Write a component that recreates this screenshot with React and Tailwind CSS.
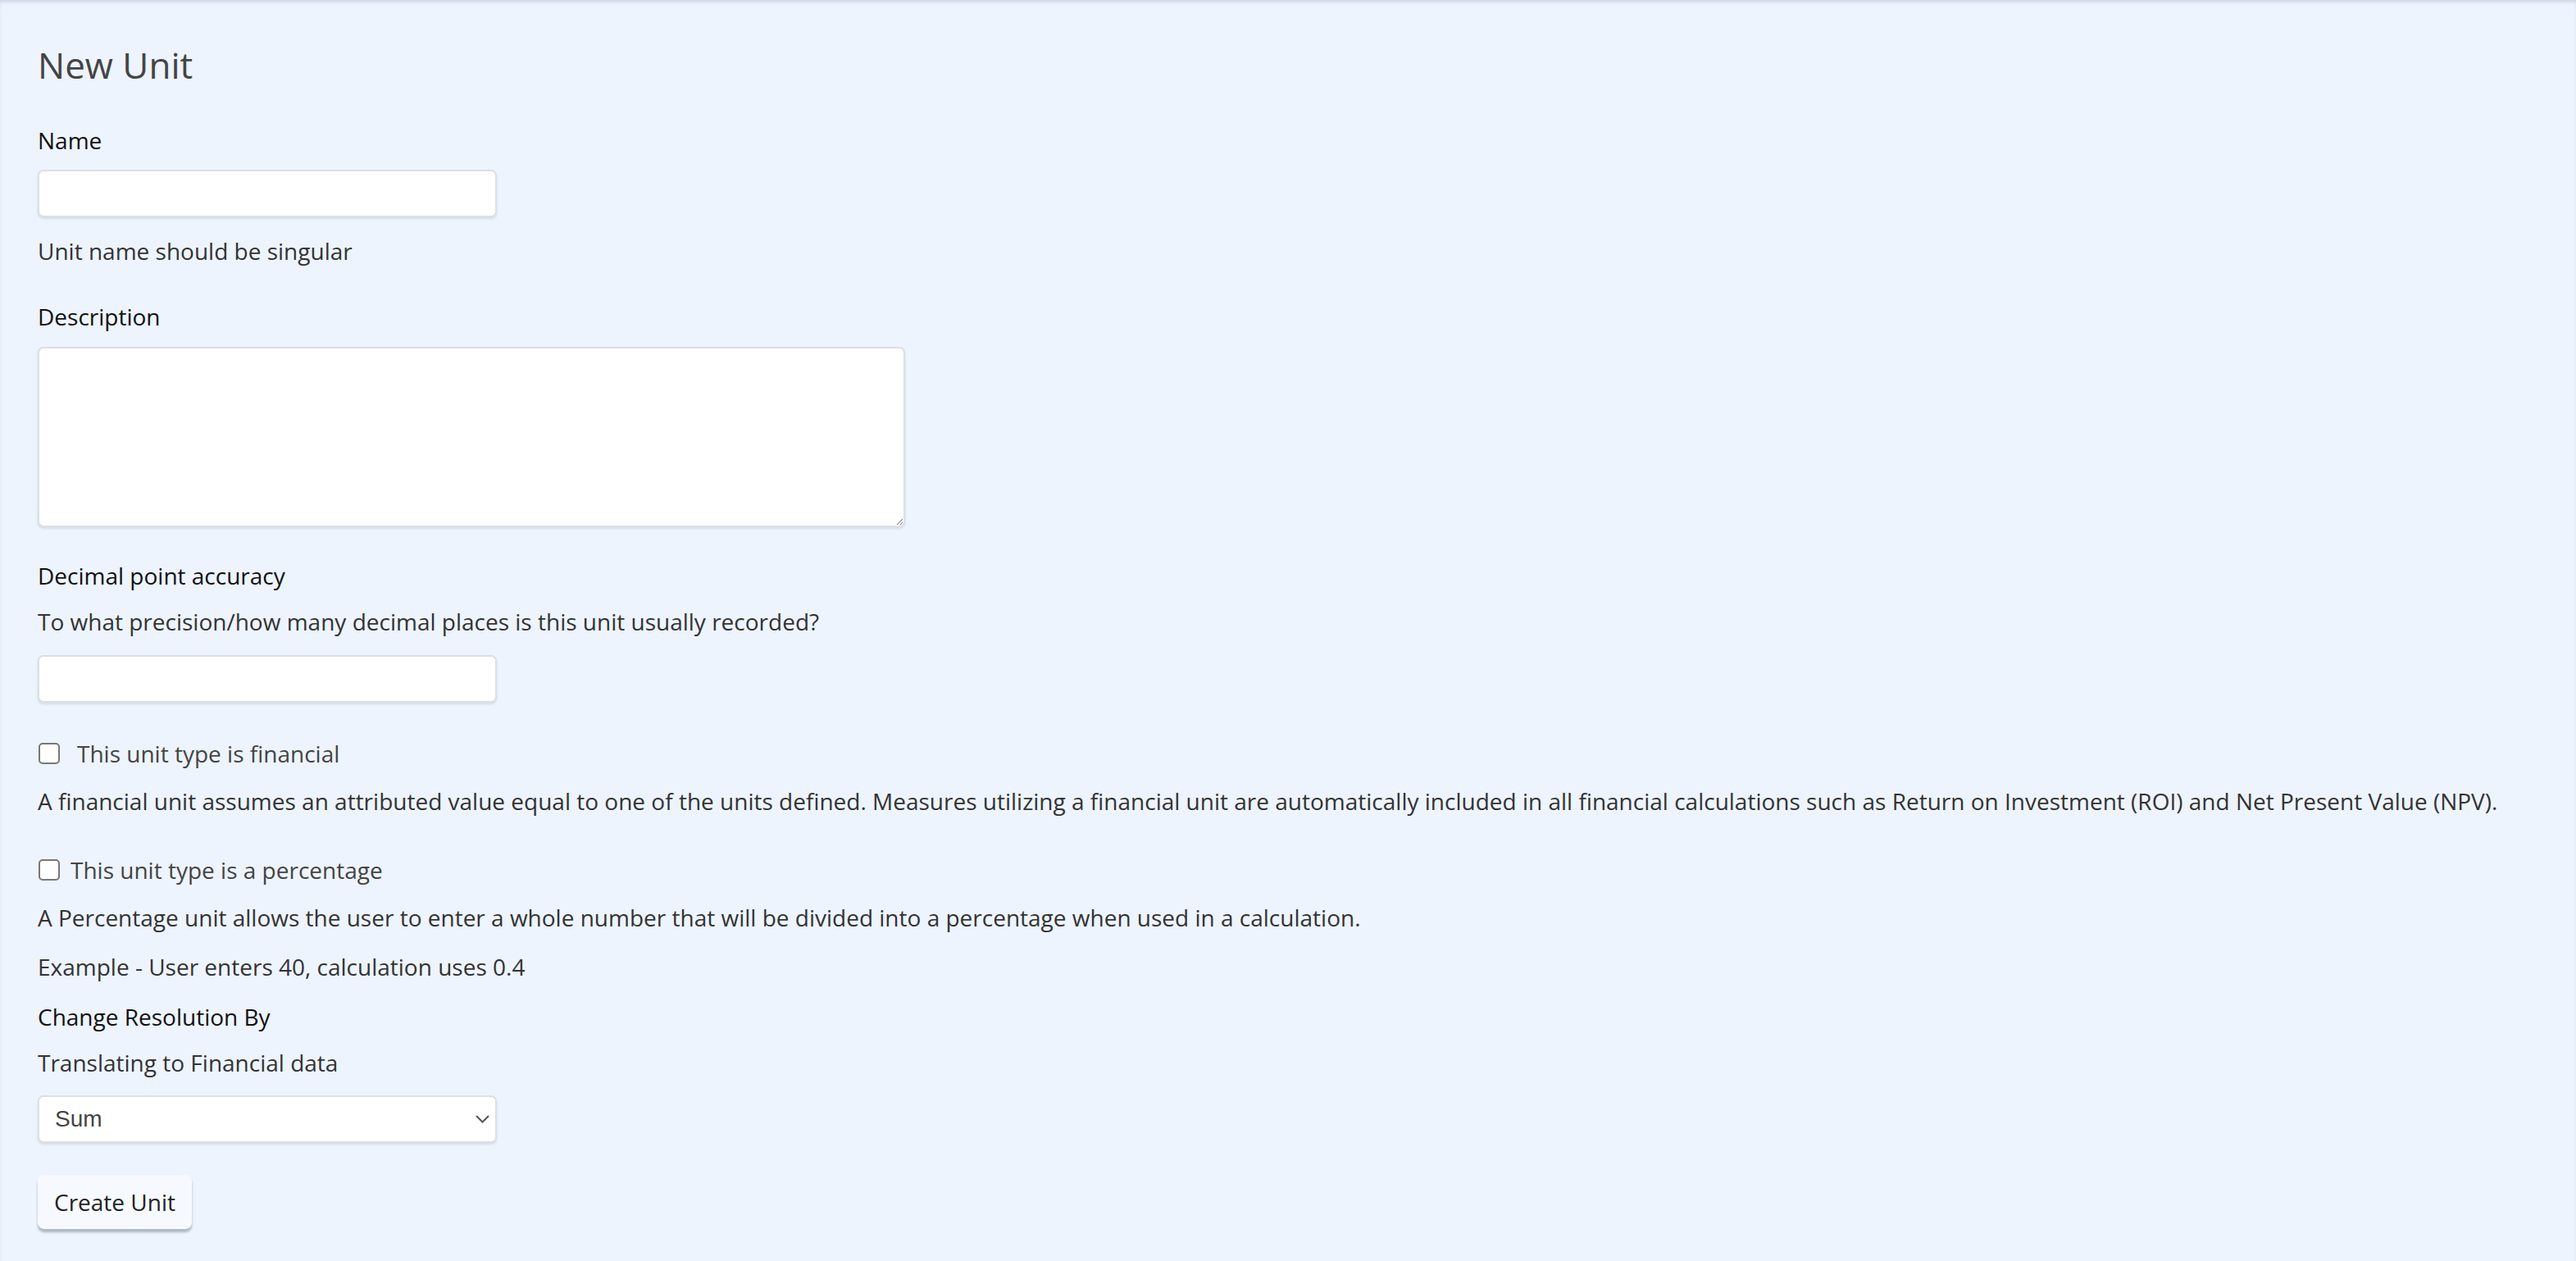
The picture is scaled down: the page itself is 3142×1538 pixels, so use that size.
import React from 'react';

const body = "text-[28px] leading-[42px]";

function Chevron() {
    return (
        <svg
            className="absolute right-[9px] top-1/2 -translate-y-1/2 w-[17px] h-[11px] pointer-events-none"
            viewBox="0 0 17 11"
            fill="none"
            stroke="#555"
            strokeWidth="2"
        >
            <path d="M1 1.5 L8.5 9 L16 1.5" />
        </svg>
    );
}

function CheckRow({ label, gap }) {
    return (
        <label className={`flex items-center ${body} text-[#444]`}>
            <input
                type="checkbox"
                className="appearance-none w-[26px] h-[26px] shrink-0 ml-[1px] border-2 border-[#777] rounded-[5px] bg-white"
            />
            <span className={gap}>{label}</span>
        </label>
    );
}

export default function App() {
    return (
        <div className="min-h-screen bg-[#edf4fe] shadow-[inset_0_4px_5px_-2px_rgba(40,50,80,0.18)] font-['Open_Sans',sans-serif] pl-[46px] pt-[53px] pb-[40px]">
            <h1 className="text-[44px] leading-[52px] text-[#444] font-normal">New Unit</h1>

            <div className={`mt-[45px] ${body} text-[#111]`}>Name</div>
            <input
                type="text"
                className="block mt-[15px] w-[560px] h-[58px] bg-white border-2 border-[#dcdfe4] rounded-[7px] shadow-[0_2px_3px_rgba(0,0,0,0.1)] outline-none"
            />
            <p className={`mt-[20px] ${body} text-[#333]`}>Unit name should be singular</p>

            <div className={`mt-[38px] ${body} text-[#111]`}>Description</div>
            <textarea className="block mt-[16px] w-[1058px] h-[220px] bg-white border-2 border-[#dcdfe4] rounded-[7px] shadow-[0_2px_3px_rgba(0,0,0,0.1)] outline-none" />

            <div className={`mt-[38px] ${body} text-[#111]`}>Decimal point accuracy</div>
            <p className={`mt-[14px] ${body} text-[#333]`}>To what precision/how many decimal places is this unit usually recorded?</p>
            <input
                type="text"
                className="block mt-[20px] w-[560px] h-[58px] bg-white border-2 border-[#dcdfe4] rounded-[7px] shadow-[0_2px_3px_rgba(0,0,0,0.1)] outline-none"
            />

            <div className="mt-[41px]">
                <CheckRow label="This unit type is financial" gap="ml-[21px]" />
            </div>
            <p className={`mt-[16px] ${body} text-[#333]`}>
                A financial unit assumes an attributed value equal to one of the units defined. Measures utilizing a financial unit are automatically included in all financial calculations such as Return on Investment (ROI) and Net Present Value (NPV).
            </p>

            <div className="mt-[42px]">
                <CheckRow label="This unit type is a percentage" gap="ml-[13px]" />
            </div>
            <p className={`mt-[16px] ${body} text-[#333]`}>
                A Percentage unit allows the user to enter a whole number that will be divided into a percentage when used in a calculation.
            </p>
            <p className={`mt-[18px] ${body} text-[#333]`}>Example - User enters 40, calculation uses 0.4</p>

            <div className={`mt-[19px] ${body} text-[#111]`}>Change Resolution By</div>
            <p className={`mt-[14px] ${body} text-[#333]`}>Translating to Financial data</p>

            <div className="relative mt-[19px] w-[560px]">
                <select
                    defaultValue="sum"
                    className="block appearance-none w-full h-[58px] bg-white border-2 border-[#dcdfe4] rounded-[7px] shadow-[0_2px_3px_rgba(0,0,0,0.1)] pl-[19px] font-['Liberation_Sans',Arial,sans-serif] text-[28px] text-[#444] outline-none"
                >
                    <option value="sum">Sum</option>
                    <option value="average">Average</option>
                </select>
                <Chevron />
            </div>

            <button className="block mt-[39px] h-[66px] px-[20px] bg-[#f6f9fe] rounded-[8px] shadow-[0_4px_3px_rgba(60,70,90,0.35)] text-[28px] text-[#222]">
                Create Unit
            </button>
        </div>
    );
}
